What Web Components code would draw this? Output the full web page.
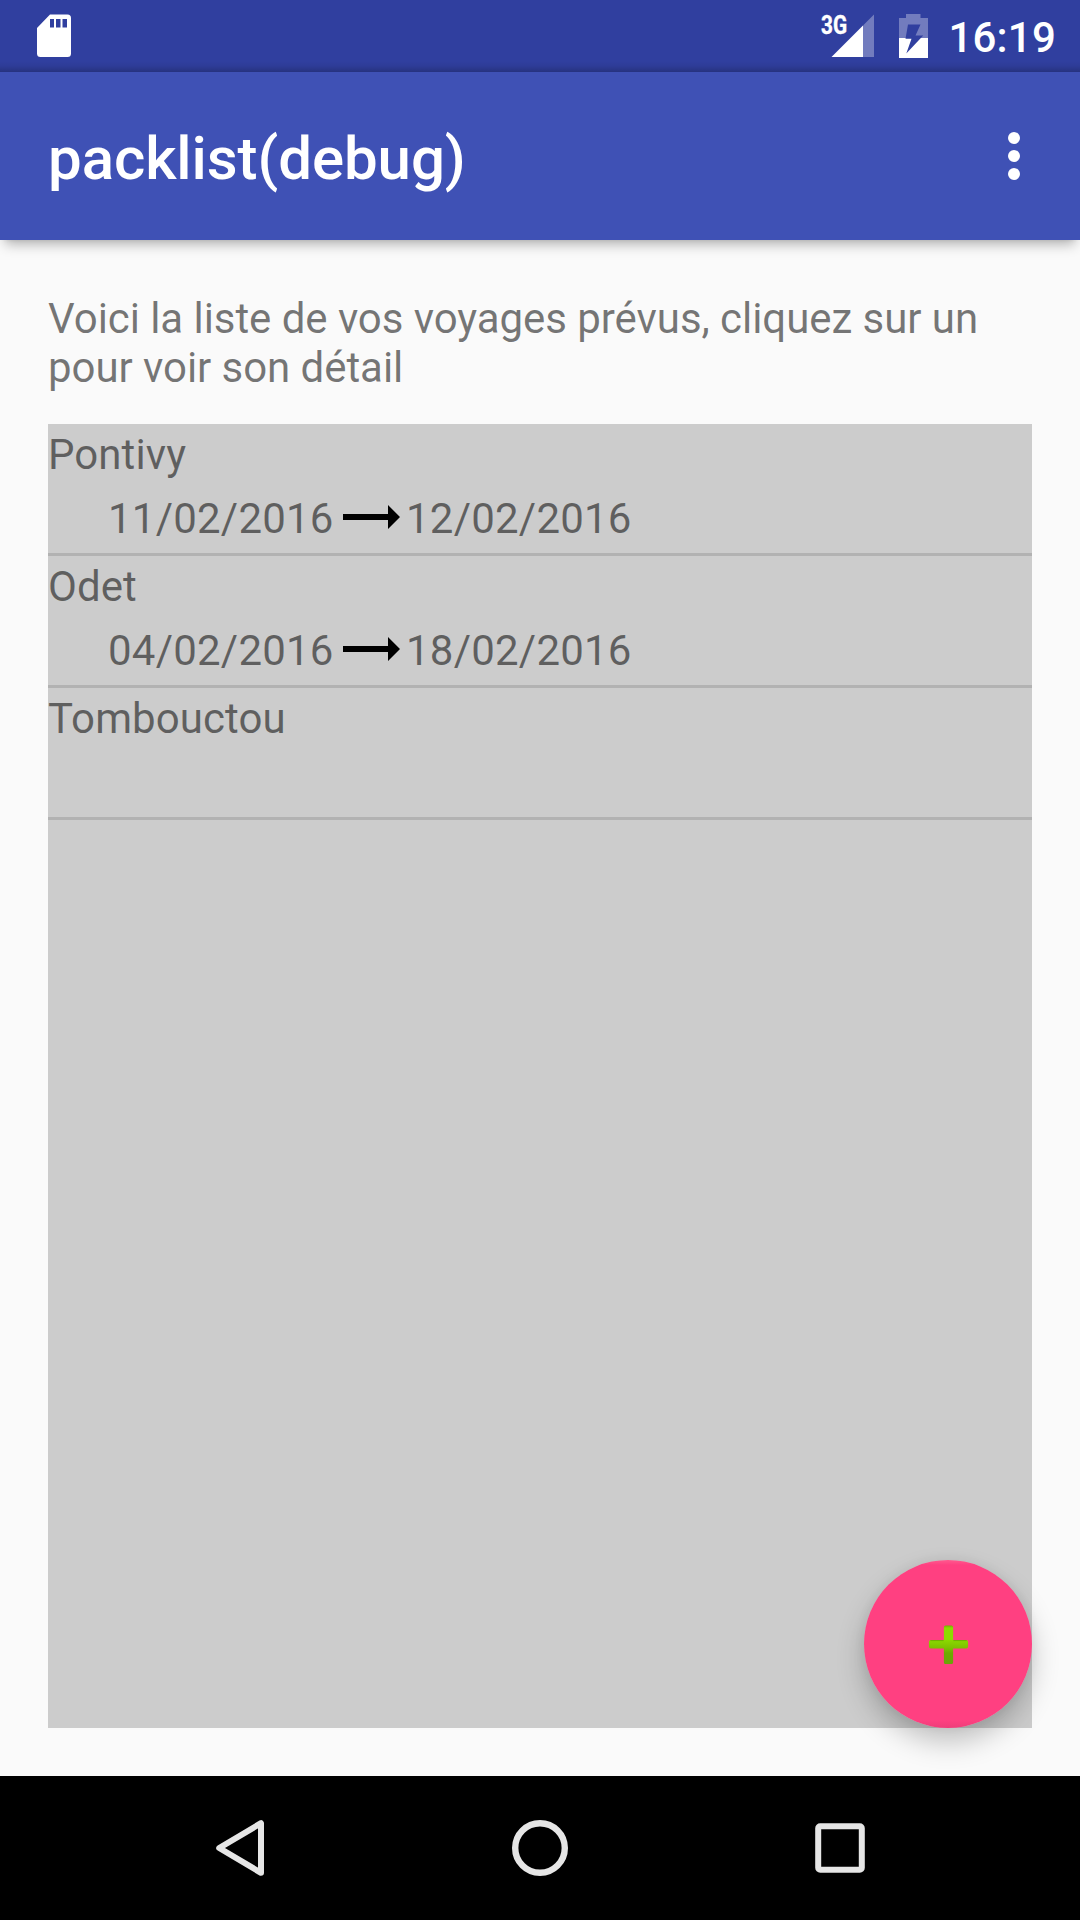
<!DOCTYPE html>
<html lang="fr">
<head>
<meta charset="utf-8">
<title>packlist(debug)</title>
<style>
html, body { margin: 0; height: 100%; }
body { font-family: Roboto, "Noto Sans", sans-serif; background: #fafafa; overflow: hidden; }
</style>
</head>
<body>
<pack-app></pack-app>
<script>
function define(name, html) {
  const template = document.createElement('template');
  template.innerHTML = html;
  customElements.define(name, class extends HTMLElement {
    constructor() {
      super();
      this.attachShadow({ mode: 'open' }).append(template.content.cloneNode(true));
    }
  });
}

define('status-bar', `
<style>
:host { display: flex; box-sizing: border-box; height: 72px; flex: none; padding: 0 24px 0 36px; color: #fff;
  background: linear-gradient(to bottom, transparent 61px, rgba(0,0,0,.05) 66px, rgba(0,0,0,.2) 72px), #303f9f; }
svg { display: block; flex: none; }
.space { flex: 1; }
.time { font-size: 42px; line-height: 49px; font-weight: 500; letter-spacing: .2px; margin: 13px 0 0 17px; white-space: nowrap; }
.net { display: flex; width: 56px; height: 72px; }
.g { font-size: 26px; font-weight: 700; line-height: 30px; width: 0; margin-top: 10px; white-space: nowrap;
  transform: scaleX(.8); transform-origin: 0 0; -webkit-text-stroke: .4px #fff; }
</style>
<svg width="36" height="72" viewBox="36 0 36 72"><path fill="#fff" fill-rule="evenodd" d="M50 14.5H67.500Q71 14.500 71 18V53.500Q71 57 67.500 57H40.500Q37 57 37 53.500V28ZM50 19V27.500H54V19ZM56 19V27.500H60.500V19ZM62.500 19V27.500H67V19Z"/></svg>
<div class="space"></div>
<div class="net"><div class="g">3G</div>
<svg width="56" height="72" viewBox="821 0 56 72"><path fill="#fff" fill-opacity=".32" d="M874 14.500V57H863V25.500Z"/><path fill="#fff" d="M831.500 57L863 25.500V57Z"/></svg></div>
<svg width="54" height="72" viewBox="877 0 54 72"><path fill="#fff" fill-opacity=".32" d="M906 14H920.500V18H928V38H899V18H906Z"/><path fill="#fff" d="M899 38H928V58H899Z"/><path fill="#303f9f" d="M908 24.600H920.500L915.500 35.500H923.200L906.300 53.500L911.500 38.800H905.500Z"/></svg>
<div class="time">16:19</div>`);

define('app-toolbar', `
<style>
:host { display: flex; flex: none; box-sizing: border-box; height: 168px; padding: 0 48px; justify-content: space-between;
  color: #fff; background: #3f51b5; position: relative; }
.title { font-size: 60px; font-weight: 500; line-height: 70px; letter-spacing: -.08px; margin-top: 52px; white-space: nowrap; }
svg { display: block; margin-top: 60px; }
.shadow { position: absolute; left: 0; right: 0; top: 168px; height: 18px; overflow: hidden; }
.shadow::before { content: ""; position: absolute; left: 5px; right: 5px; top: -40px; height: 40px;
  box-shadow: 0 4px 12px rgba(0,0,0,.3), 0 0 4px rgba(0,0,0,.08); }
</style>
<div class="title"><slot></slot></div>
<svg width="36" height="48" viewBox="996 132 36 48" fill="#fff"><circle cx="1014" cy="138" r="6"/><circle cx="1014" cy="156" r="6"/><circle cx="1014" cy="174" r="6"/></svg>
<div class="shadow"></div>`);

define('trip-row', `
<style>
:host { display: flex; flex-direction: column; box-sizing: border-box; height: 132px; padding-top: 6px; border-bottom: 3px solid #b2b2b2;
  font-size: 42px; line-height: 49px; letter-spacing: .08px; color: rgba(0,0,0,.54); }
.dates { display: flex; margin: 15px 0 0 60px; height: 49px; letter-spacing: .22px; }
:host([undated]) .dates { display: none; }
.from { width: 226px; }
svg { display: block; width: 72px; height: 49px; flex: none; }
</style>
<div><slot></slot></div>
<div class="dates"><div class="from"><slot name="from"></slot></div>
<svg viewBox="334 494 72 49"><path fill="#000" d="M343 514H388V505L400 517L388 529V520H343Z"/></svg>
<div><slot name="to"></slot></div></div>`);

define('trip-list', `
<style>:host { display: flex; flex-direction: column; flex: 1; background: #ccc; }</style><slot></slot>`);

define('add-button', `
<style>
:host { position: absolute; right: 48px; bottom: 192px; width: 168px; height: 168px; border-radius: 50%;
  display: flex; align-items: center; justify-content: center;
  background: linear-gradient(to bottom, #ff5a8f 0, #ff4081 5px, #ff4081 160px, #ee3d7a 168px);
  box-shadow: 0 14px 28px rgba(0,0,0,.23), 0 0 12px rgba(0,0,0,.06); }
svg { display: block; }
</style>
<svg width="47" height="47" viewBox="0 0 48 48">
<defs><linearGradient id="g" x1="0" y1="4" x2="0" y2="44" gradientUnits="userSpaceOnUse"><stop offset="0" stop-color="#6da600"/><stop offset=".08" stop-color="#8ddb00"/><stop offset=".36" stop-color="#8ddb00"/><stop offset=".58" stop-color="#7dc200"/><stop offset=".72" stop-color="#6eaa00"/><stop offset="1" stop-color="#6da30a"/></linearGradient></defs>
<path fill="url(#g)" d="M21 4.500H27Q28.700 4.500 28.700 6.500V19.500H42Q44 19.500 44 21.500V26Q44 28 42 28H28.700V42Q28.700 44 27 44H21Q19.300 44 19.300 42V28H6Q4 28 4 26V21.500Q4 19.500 6 19.500H19.300V6.500Q19.300 4.500 21 4.500Z"/>
<path stroke="#669a08" stroke-width="1" opacity=".7" d="M5.500 20H19M29 20H42.500"/></svg>`);

define('nav-bar', `
<style>
:host { display: flex; flex: none; height: 144px; background: #000; align-items: center; justify-content: center; gap: 240px; }
svg { display: block; width: 60px; height: 60px; fill: none; stroke: #e6e6e6; stroke-width: 6; stroke-linejoin: round; }
</style>
<svg viewBox="0 0 60 60"><path d="M51 5.200V54.800L9.200 30Z"/></svg>
<svg viewBox="0 0 60 60"><circle cx="30" cy="30" r="24.800" stroke-width="6.400"/></svg>
<svg viewBox="0 0 60 60"><rect x="8.200" y="8.200" width="43.600" height="43.600" rx="2"/></svg>`);

define('pack-app', `
<style>
:host { display: flex; flex-direction: column; position: relative; width: 1080px; height: 1920px; background: #fafafa; }
main { display: flex; flex-direction: column; flex: 1; padding: 54px 48px 48px; }
p { margin: 0 0 32px; font-size: 42px; line-height: 49px; letter-spacing: -.06px; color: rgba(0,0,0,.54); }
</style>
<status-bar></status-bar>
<app-toolbar>packlist(debug)</app-toolbar>
<main>
<p>Voici la liste de vos voyages prévus, cliquez sur un<br>pour voir son détail</p>
<trip-list>
<trip-row>Pontivy<span slot="from">11/02/2016</span><span slot="to">12/02/2016</span></trip-row>
<trip-row>Odet<span slot="from">04/02/2016</span><span slot="to">18/02/2016</span></trip-row>
<trip-row undated>Tombouctou</trip-row>
</trip-list>
</main>
<nav-bar></nav-bar>
<add-button></add-button>`);
</script>
</body>
</html>
